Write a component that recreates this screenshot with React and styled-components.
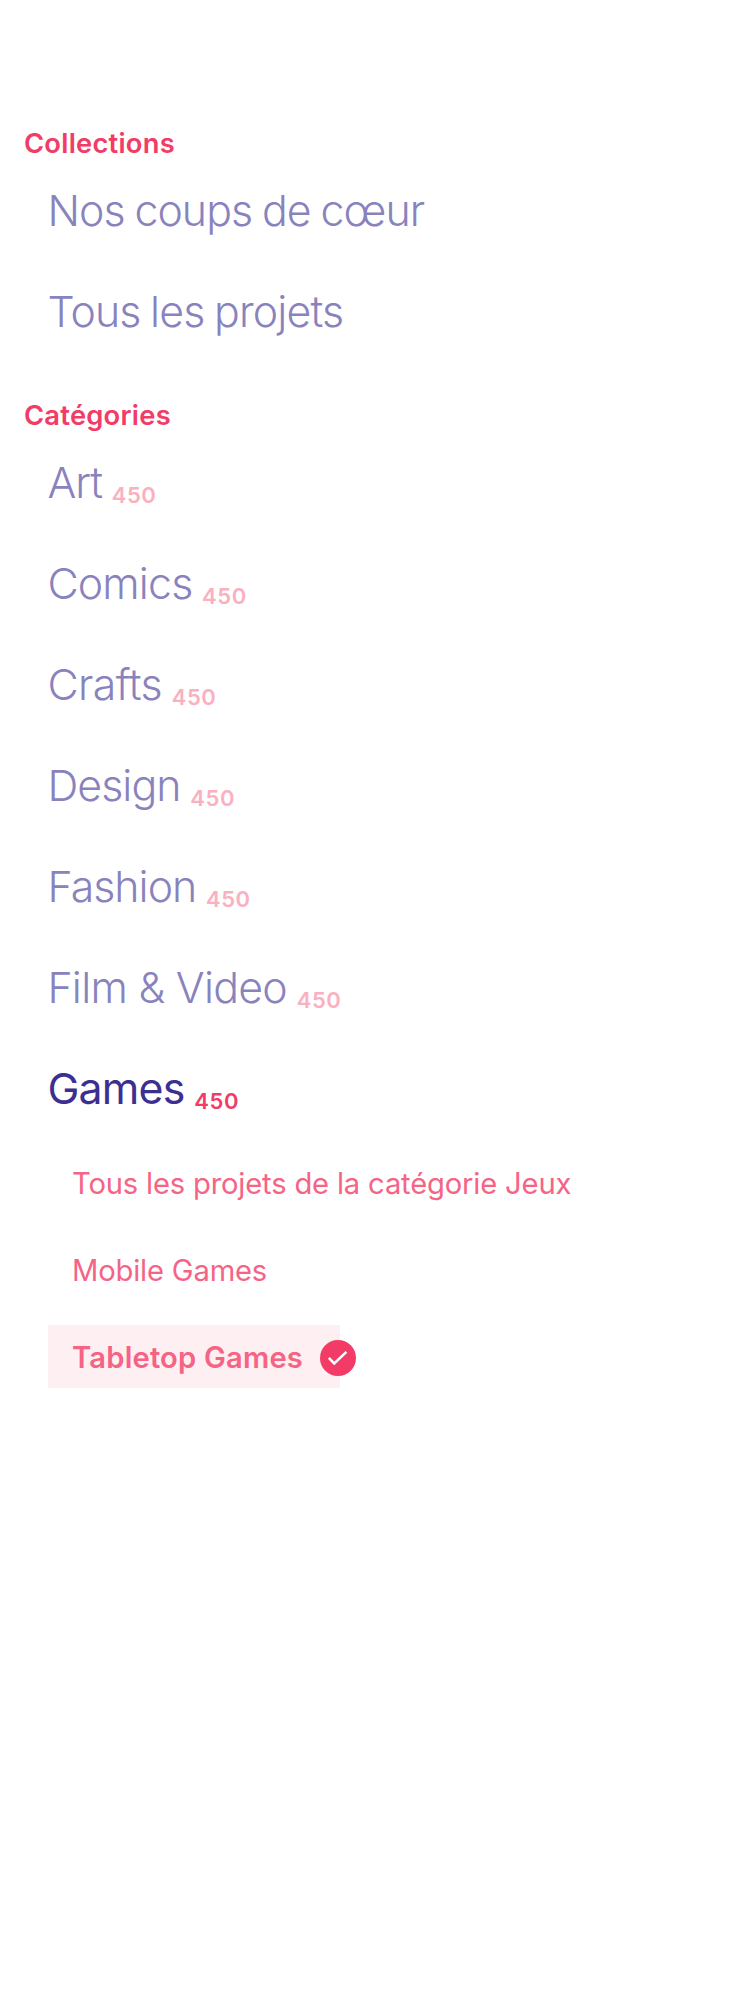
import React from 'react';
import styled, { createGlobalStyle } from 'styled-components';

const Global = createGlobalStyle`
  *{box-sizing:border-box}
  body{margin:0;background:#fff;font-family:Inter,"Liberation Sans",sans-serif}
`;
const Page = styled.nav`
  width:750px;
  height:2000px;
  padding:121px 24px 0;
  background:#fff;
`;
const Section = styled.section`
  margin-bottom:25px;
`;
const Heading = styled.h2`
  margin:0 0 1px;
  height:44px;
  line-height:46px;
  font-size:27.3px;
  font-weight:600;
  letter-spacing:0.25px;
  color:#f23b66;
  white-space:nowrap;
`;
const List = styled.ul`
  list-style:none;
  margin:0;
  padding:0;
`;
const SubList = styled(List)`
  margin-top:6px;
`;
const Item = styled.li`
  display:flex;
  align-items:baseline;
  height:101px;
  padding-left:23.4px;
  line-height:89px;
  font-size:42.8px;
  font-weight:${p => p.$active ? 400 : 300};
  color:${p => p.$active ? '#3b3092' : '#8983bd'};
  white-space:nowrap;
`;
const Label = styled.span`
  letter-spacing:${p => p.$track}px;
  word-spacing:${p => p.$words || 0}px;
`;
const Count = styled.span`
  position:relative;
  top:5px;
  margin-left:9.6px;
  font-size:22px;
  letter-spacing:0.6px;
  font-weight:600;
  color:${p => p.$active ? '#f23b66' : '#fbb0c0'};
`;
const SubItem = styled.li`
  display:flex;
  align-items:center;
  height:63px;
  width:${p => p.$active ? '292px' : 'auto'};
  margin:0 0 24px 24px;
  padding:2px 0 0 24px;
  font-size:29.2px;
  white-space:nowrap;
  font-weight:${p => p.$active ? 600 : 400};
  color:#f56485;
  background:${p => p.$active ? '#feeff2' : 'none'};
`;
const Check = styled.svg`
  flex:none;
  width:36px;
  height:36px;
  margin-left:17px;
`;

const collections = [
  { name: 'Nos coups de cœur', track: -0.9, words: -1.4 },
  { name: 'Tous les projets', track: -0.85, words: -1.6 },
];
const categories = [
  { name: 'Art', track: -1 },
  { name: 'Comics', track: -0.8 },
  { name: 'Crafts', track: -0.6 },
  { name: 'Design', track: -0.9 },
  { name: 'Fashion', track: -0.95 },
  { name: 'Film & Video', track: -0.7 },
  { name: 'Games', track: -0.75, active: true },
];

export default function App() {
  return (
    <Page>
      <Global />
      <Section>
        <Heading>Collections</Heading>
        <List>
          {collections.map(c => (
            <Item key={c.name}><Label $track={c.track} $words={c.words}>{c.name}</Label></Item>
          ))}
        </List>
      </Section>
      <Section>
        <Heading>Catégories</Heading>
        <List>
          {categories.map(c => (
            <Item key={c.name} $active={c.active}>
              <Label $track={c.track}>{c.name}</Label>
              <Count $active={c.active}>450</Count>
            </Item>
          ))}
        </List>
        <SubList>
          <SubItem><Label $track={-0.18}>Tous les projets de la catégorie Jeux</Label></SubItem>
          <SubItem><Label $track={-0.18}>Mobile Games</Label></SubItem>
          <SubItem $active>
            <Label $track={0.18}>Tabletop Games</Label>
            <Check viewBox="0 0 36 36">
              <circle cx="18" cy="18" r="18" fill="#f23b66" />
              <path d="M8.8 17.9l5.4 5.5L26.4 11.8" fill="none" stroke="#fff" strokeWidth="2.5" />
            </Check>
          </SubItem>
        </SubList>
      </Section>
    </Page>
  );
}
